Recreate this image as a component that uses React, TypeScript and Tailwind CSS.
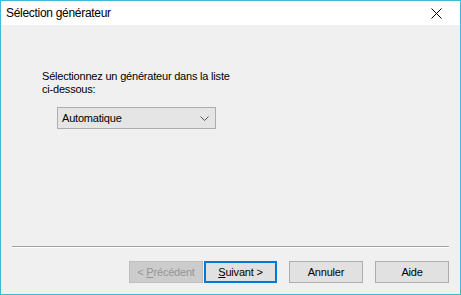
import React from "react";

const font = { fontFamily: '"Liberation Sans", Arial, sans-serif' };

function Btn({ children, variant = "normal", w = "w-[74px]" }: { children: React.ReactNode; variant?: "normal" | "default" | "disabled"; w?: string }) {
  const cls =
    variant === "disabled"
      ? "border border-[#bfbfbf] bg-[#cccccc] text-[#959595]"
      : variant === "default"
      ? "border-2 border-[#0078d7] bg-[#e1e1e1] text-black"
      : "border border-[#adadad] bg-[#e1e1e1] text-black";
  return (
    <div className={`${w} h-[22px] flex items-center justify-center text-[11px] leading-none tracking-[-0.2px] ${cls}`}>
      {children}
    </div>
  );
}

export default function App() {
  return (
    <div className="w-[461px] h-[295px] border border-[#3fb9d4] flex flex-col bg-[#f0f0f0]" style={font}>
      <div className="h-[24px] bg-white flex items-center justify-between">
        <span className="pl-[5px] text-[12px] tracking-[-0.3px] text-black">Sélection générateur</span>
        <div className="w-[46px] h-[24px] flex items-center justify-center pr-[2px]">
          <svg width="11" height="11" viewBox="0 0 11 11">
            <path d="M0.5 0.5 L10.5 10.5 M10.5 0.5 L0.5 10.5" stroke="#000" strokeWidth="1" fill="none" />
          </svg>
        </div>
      </div>
      <div className="flex-1 flex flex-col">
        <div className="pt-[45px] pl-[41px] text-[11px] leading-[13px] tracking-[-0.2px] text-black">
          <div>Sélectionnez un générateur dans la liste</div>
          <div>ci-dessous:</div>
        </div>
        <div className="mt-[11px] ml-[56px] w-[159px] h-[22px] border border-[#adadad] bg-[#e5e5e5] flex items-center justify-between pl-[4px] pr-[6px] text-[11px] tracking-[-0.2px] text-black">
          <span>Automatique</span>
          <svg width="9" height="5" viewBox="0 0 9 5">
            <path d="M0.5 0.5 L4.5 4.5 L8.5 0.5" stroke="#555" strokeWidth="1" fill="none" />
          </svg>
        </div>
        <div className="flex-1" />
        <div className="mx-[11px] h-[2px] border-t border-[#a0a0a0] border-b border-b-white" />
        <div className="mt-[13px] mb-[11px] pr-[11px] flex justify-end items-center">
          <Btn variant="disabled">
            <span>&lt; <span className="underline">P</span>récédent</span>
          </Btn>
          <div className="ml-[1px]">
            <Btn variant="default" w="w-[73px]">
              <span><span className="underline">S</span>uivant &gt;</span>
            </Btn>
          </div>
          <div className="ml-[12px]">
            <Btn>Annuler</Btn>
          </div>
          <div className="ml-[12px]">
            <Btn>Aide</Btn>
          </div>
        </div>
      </div>
    </div>
  );
}
